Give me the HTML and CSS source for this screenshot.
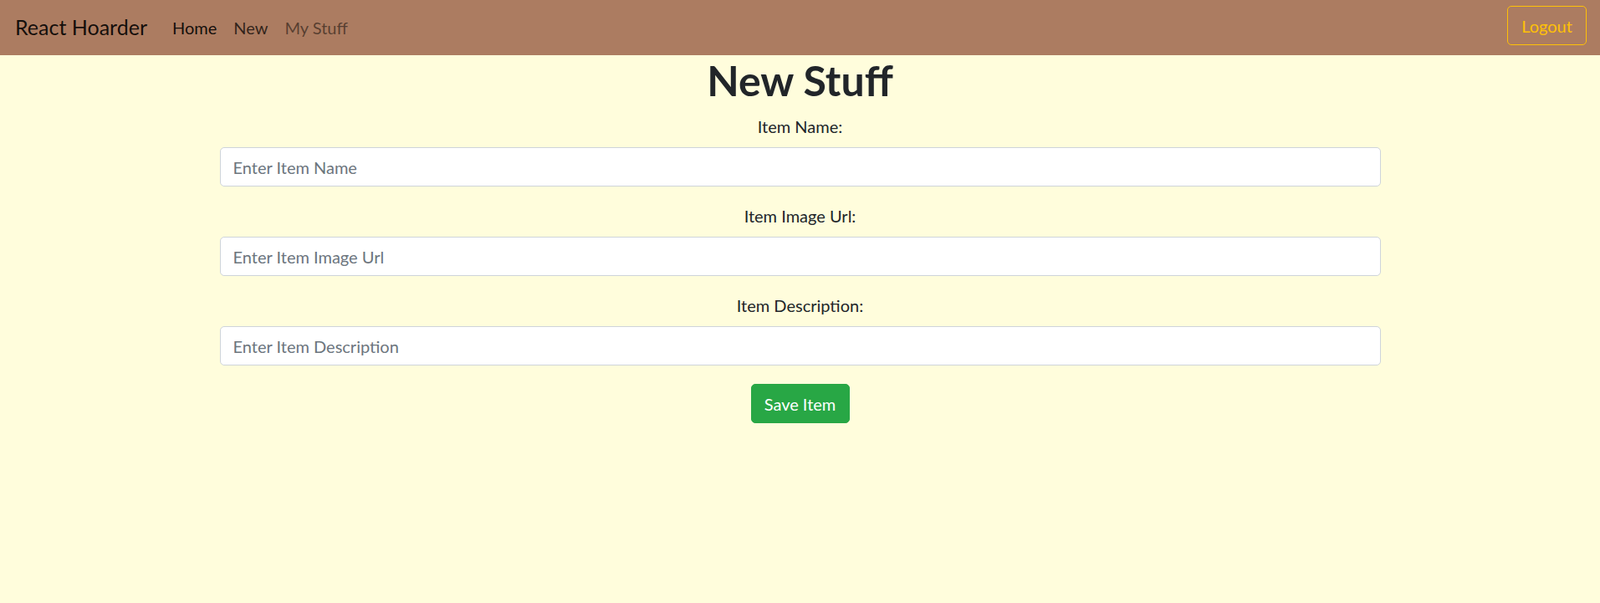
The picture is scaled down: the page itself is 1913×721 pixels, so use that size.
FILE: index.html
```html
<!DOCTYPE html>
<html lang="en">
<head>
<meta charset="utf-8">
<title>React Hoarder</title>
<link rel="stylesheet" href="styles.css">
</head>
<body>
<nav class="navbar">
  <a class="brand" href="#">React Hoarder</a>
  <ul class="nav">
    <li><a class="nav-link active" href="#">Home</a></li>
    <li><a class="nav-link semi" href="#">New</a></li>
    <li><a class="nav-link" href="#">My Stuff</a></li>
  </ul>
  <button class="btn-logout" type="button">Logout</button>
</nav>
<main class="container">
  <h1 class="title">New Stuff</h1>
  <form class="form">
    <div class="form-group">
      <label class="label" for="name">Item Name:</label>
      <input class="input" id="name" type="text" placeholder="Enter Item Name">
    </div>
    <div class="form-group">
      <label class="label" for="url">Item Image Url:</label>
      <input class="input" id="url" type="text" placeholder="Enter Item Image Url">
    </div>
    <div class="form-group">
      <label class="label" for="desc">Item Description:</label>
      <input class="input" id="desc" type="text" placeholder="Enter Item Description">
    </div>
    <button class="btn-save" type="button">Save Item</button>
  </form>
</main>
</body>
</html>
```
FILE: styles.css
```css
* { box-sizing: border-box; }
html, body { height: 100%; }
body {
  margin: 0;
  background: #fffddc;
  color: #212529;
  font-family: "Segoe UI", Lato, "Noto Sans", sans-serif;
  font-size: 20px;
  line-height: 1.5;
}
.navbar {
  display: flex;
  align-items: center;
  height: 66px;
  padding: 0 16px 0 18px;
  background: #ac7c61;
}
.brand {
  font-size: 25px;
  color: rgba(0,0,0,.9);
  text-decoration: none;
  margin-right: 20px;
}
.nav {
  display: flex;
  list-style: none;
  margin: 0;
  padding: 0;
  flex: 1;
}
.nav-link {
  display: block;
  padding: 0 10px;
  font-size: 20px;
  color: rgba(0,0,0,.5);
  text-decoration: none;
}
.nav-link.active { color: rgba(0,0,0,.9); }
.nav-link.semi { color: rgba(0,0,0,.72); }
.btn-logout {
  font: inherit;
  font-size: 20px;
  color: #ffc107;
  background: transparent;
  border: 1px solid #ffc107;
  border-radius: 5px;
  height: 47px;
  width: 95px;
  padding: 0;
  margin-top: -5px;
}
.container {
  width: 1388px;
  margin: 0 auto;
  text-align: center;
}
.title {
  margin: 0 0 10px;
  font-size: 50px;
  line-height: 60px;
  font-weight: 700;
}
.form { display: flex; flex-direction: column; align-items: center; }
.form-group {
  width: 100%;
  margin-bottom: 20px;
}
.label {
  display: block;
  margin-bottom: 10px;
  line-height: 30px;
}
.input {
  display: block;
  width: 100%;
  height: 47px;
  padding: 0 15px;
  font: inherit;
  font-size: 20px;
  color: #495057;
  background: #fff;
  border: 1px solid #ced4da;
  border-radius: 5px;
}
.input::placeholder { color: #6c757d; }
.btn-save {
  font: inherit;
  font-size: 20px;
  color: #fff;
  background: #28a745;
  border: 1px solid #28a745;
  border-radius: 5px;
  height: 47px;
  width: 118px;
  padding: 0;
  margin-top: 2px;
}
```
